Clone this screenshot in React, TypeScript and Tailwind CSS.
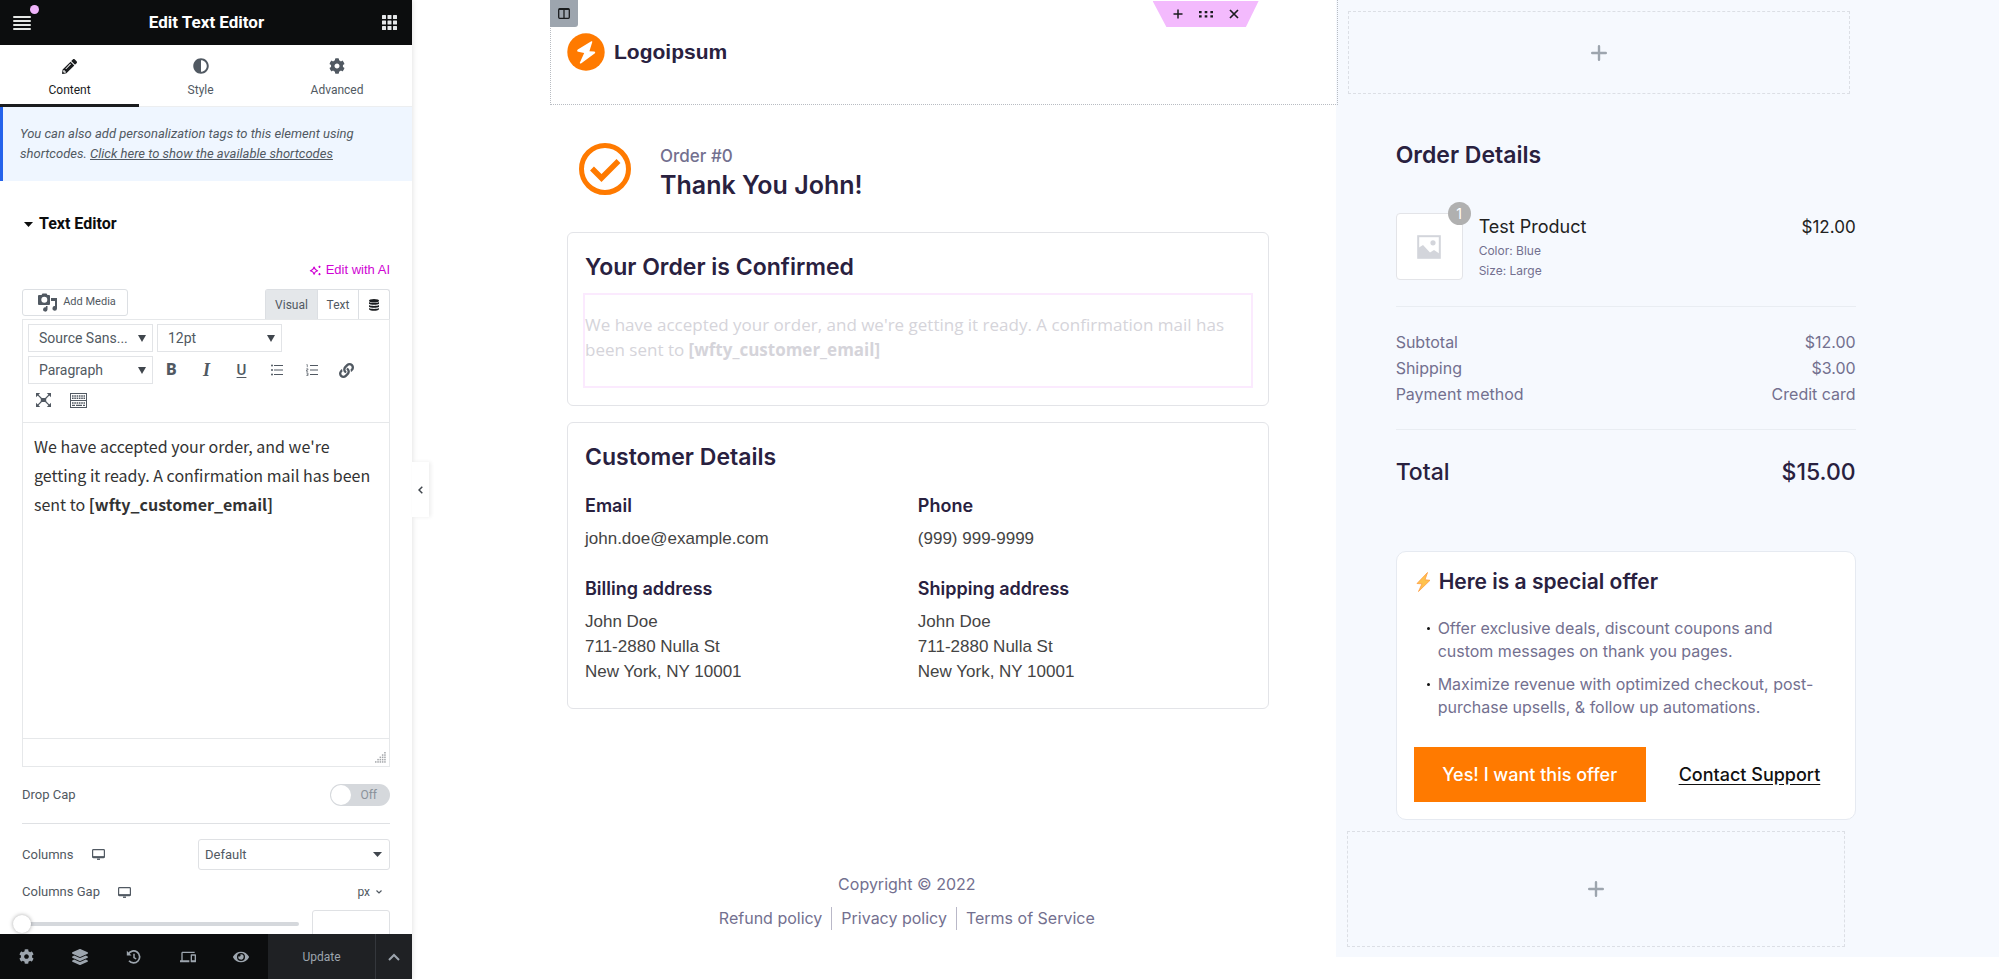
import React from 'react';
import { FaAdjust, FaCog, FaLayerGroup, FaLink, FaPencilAlt, FaEye } from 'react-icons/fa';
import { MdDevices } from 'react-icons/md';

const SANS = "font-['Inter',sans-serif]";

function Caret({ className }: { className: string }) {
  return (
    <svg viewBox="0 0 8 6" preserveAspectRatio="none" className={className} fill="currentColor" aria-hidden="true">
      <path d="M0 0h8L4 6z" />
    </svg>
  );
}

function MenuIcon() {
  return (
    <svg viewBox="0 0 18 14" className="h-[14px] w-[18px]" fill="#e6e8e6" aria-hidden="true">
      <rect y="0" width="18" height="2" rx="1" />
      <rect y="4" width="18" height="2" rx="1" />
      <rect y="8" width="18" height="2" rx="1" />
      <rect y="12" width="18" height="2" rx="1" />
    </svg>
  );
}

function GridIcon() {
  const cells = [0, 5.5, 11];
  return (
    <svg viewBox="0 0 15 15" className="size-[15px]" fill="#e6e8ea" aria-hidden="true">
      {cells.map((y) => cells.map((x) => <rect key={`${x}-${y}`} x={x} y={y} width="4" height="4" rx="0.5" />))}
    </svg>
  );
}

function SparkleIcon() {
  return (
    <svg viewBox="0 0 14 14" className="size-[13px]" fill="none" stroke="currentColor" strokeWidth="1.2" aria-hidden="true">
      <path d="M5.5 3.2C6 5.8 6.7 6.6 9.3 7.2 6.7 7.8 6 8.5 5.5 11.1 5 8.5 4.2 7.8 1.4 7.2 4.2 6.6 5 5.8 5.5 3.2Z" strokeLinejoin="round" />
      <path d="M11.3 1.8v2.400M10.1 3h2.400M11.3 9.800v2.400M10.1 11h2.400" />
    </svg>
  );
}

function MediaIcon() {
  return (
    <svg viewBox="0 0 20 19" className="h-[19px] w-[20px]" fill="currentColor" aria-hidden="true">
      <path d="M2 2h1.5L4.5.5h4L9.5 2H11a1 1 0 0 1 1 1v8a1 1 0 0 1-1 1H1a1 1 0 0 1-1-1V3a1 1 0 0 1 1-1zM6.3 3.8a3 3 0 1 0 0 6 3 3 0 0 0 0-6z" fillRule="evenodd" />
      <path d="M13 5h6v10.5a2.3 2.3 0 1 1-2-2.4V8h-4z" />
      <path d="M9.500 13v3.500a2.200 2.200 0 1 1-1.600-2.200V13z" />
    </svg>
  );
}

function DatabaseIcon() {
  return (
    <svg viewBox="0 0 10 12" className="h-3 w-[10px]" fill="#1b1d20" aria-hidden="true">
      <ellipse cx="5" cy="1.700" rx="5" ry="1.700" />
      <path d="M0 3c1.500 1.200 8.500 1.200 10 0v1.800c-1.500 1.300-8.500 1.300-10 0zM0 6c1.500 1.200 8.500 1.200 10 0v1.800c-1.500 1.300-8.500 1.300-10 0zM0 9c1.500 1.200 8.500 1.200 10 0v1.300c-1.500 2-8.500 2-10 0z" />
    </svg>
  );
}

function HistoryIcon() {
  return (
    <svg viewBox="0 0 15 14" className="h-[14px] w-[15px]" fill="none" stroke="currentColor" strokeWidth="1.700" aria-hidden="true">
      <path d="M2.300 4.200A6 6 0 1 1 3 10.800" />
      <path d="M8 3.800v3.700l2.200 1.500" strokeWidth="1.500" />
      <path d="M.800.800v4.700h4.700z" fill="currentColor" stroke="none" />
    </svg>
  );
}

function MonitorIcon() {
  return (
    <svg viewBox="0 0 13 11" className="h-[11px] w-[13px]" fill="none" stroke="#515962" aria-hidden="true">
      <rect x="0.600" y="0.600" width="11.800" height="8" rx="0.800" strokeWidth="1.200" />
      <path d="M0.600 7.900h11.800" strokeWidth="1.600" />
      <path d="M5 10.200h3" strokeWidth="1.400" />
    </svg>
  );
}

function BulletListIcon() {
  return (
    <svg viewBox="0 0 12 12" className="size-3" stroke="currentColor" fill="currentColor" aria-hidden="true">
      <path d="M3 1.500h9M3 6h9M3 10.500h9" strokeWidth="1" />
      <g stroke="none">
        <circle cx="1" cy="1.500" r="1" />
        <circle cx="1" cy="6" r="1" />
        <circle cx="1" cy="10.500" r="1" />
      </g>
    </svg>
  );
}

function NumberListIcon() {
  return (
    <svg viewBox="0 0 12 12" className="size-3" stroke="currentColor" fill="none" aria-hidden="true">
      <path d="M4 1.500h8M4 6h8M4 10.500h8" strokeWidth="1" />
      <path d="M.5.600h.8v2.600M.3 4.800h1.600v1.200H.5v1.300h1.600M.3 8.900h1.700v2.700H.3M.8 10.200h1.200" strokeWidth="0.700" />
    </svg>
  );
}

function ExpandIcon() {
  return (
    <svg viewBox="0 0 15 14" className="h-[14px] w-[15px]" fill="currentColor" aria-hidden="true">
      <path d="M4.800 5h5.400v4H4.800zM0 0h4.200L0 4.200zM15 0v4.200L10.800 0zM0 14V9.800L4.200 14zM15 14h-4.200L15 9.800z" />
      <path d="M1 1l4.500 4.500M14 1L9.500 5.500M1 13l4.500-4.500M14 13L9.500 8.500" stroke="currentColor" strokeWidth="1.100" />
    </svg>
  );
}

function KeyboardIcon() {
  return (
    <svg viewBox="0 0 17 15" className="h-[15px] w-[17px]" fill="none" stroke="currentColor" aria-hidden="true">
      <rect x="0.500" y="0.500" width="16" height="14" />
      <path d="M1 7.500h15" strokeWidth="1" />
      <path d="M2 3h13M2 5.200h13M2 10h13" strokeWidth="1.400" strokeDasharray="1.600 0.700" />
      <path d="M2 12.400h3M6 12.400h6M13 12.400h2" strokeWidth="1.400" />
    </svg>
  );
}

function ResizeGrip() {
  const dots: [number, number][] = [];
  for (let c = 0; c < 5; c++) for (let r = 0; r <= c; r++) dots.push([c * 2.3, 9.2 - r * 2.3]);
  return (
    <svg viewBox="0 0 11 11" className="size-[11px]" fill="#a3a6aa" aria-hidden="true">
      {dots.map(([x, y]) => (
        <rect key={`${x}-${y}`} x={x} y={y} width="1.500" height="1.500" />
      ))}
    </svg>
  );
}

function ToolbarSelect({ label, value }: { label: string; value: string }) {
  return (
    <div className="relative h-7 w-[125px]">
      <select
        aria-label={label}
        defaultValue={value}
        className="size-full appearance-none rounded-none border border-[#e2e4e7] bg-white pl-[10px] text-sm text-[#515962]"
      >
        <option>{value}</option>
      </select>
      <Caret className="pointer-events-none absolute right-[7px] top-[11px] h-[7px] w-2 text-[#40464d]" />
    </div>
  );
}

function ToolButton({ label, children }: { label: string; children: React.ReactNode }) {
  return (
    <button type="button" aria-label={label} className="flex h-7 w-[35px] items-center justify-center text-[#515962]">
      {children}
    </button>
  );
}

function PanelTab({ label, icon, active }: { label: string; icon: React.ReactNode; active?: boolean }) {
  return (
    <button
      type="button"
      role="tab"
      aria-selected={!!active}
      className={
        active
          ? 'flex flex-auto flex-col items-center gap-2 border-b-[3px] border-[#1a1c1e] pt-[13px] text-[12px] leading-4 text-[#1a1c1e]'
          : 'flex flex-auto flex-col items-center gap-2 border-b border-[#eceef0] pt-[13px] text-[12px] leading-4 text-[#515962]'
      }
    >
      <span className="flex size-4 items-center justify-center">{icon}</span>
      {label}
    </button>
  );
}

function EditorPanel() {
  return (
    <aside className="relative z-10 flex h-screen w-[412px] shrink-0 flex-col bg-white font-['Roboto',sans-serif] text-[13px] text-[#515962] shadow-[0_0_6px_rgba(0,0,0,0.14)]">
      <header className="flex h-[45px] shrink-0 items-center justify-between bg-[#0c0d0e] pl-[13px] pr-[15px]">
        <button type="button" aria-label="Menu" className="relative">
          <MenuIcon />
          <span className="absolute -right-2 -top-[11px] size-[9px] rounded-full bg-[#f0b4fb]" />
        </button>
        <h1 className="text-[17px] font-bold text-white">Edit Text Editor</h1>
        <button type="button" aria-label="Widgets">
          <GridIcon />
        </button>
      </header>

      <div role="tablist" className="flex h-[62px] shrink-0">
        <PanelTab label="Content" active icon={<FaPencilAlt className="size-[15px]" />} />
        <PanelTab label="Style" icon={<FaAdjust className="size-4" />} />
        <PanelTab label="Advanced" icon={<FaCog className="size-4" />} />
      </div>

      <div className="min-h-0 flex-1 overflow-hidden">
        <p className="h-[74px] border-l-[3px] border-[#2563eb] bg-[#eff6ff] pl-[17px] pt-[17px] text-[13px] italic leading-5">
          You can also add personalization tags to this element using
          <br />
          shortcodes.{' '}
          <a href="#shortcodes" className="underline">
            Click here to show the available shortcodes
          </a>
        </p>

        <div className="px-[22px]">
          <h2 className="mt-[31px] flex h-6 items-center gap-[6px] text-base font-bold text-[#0c0d0e]">
            <Caret className="ml-[2px] h-[5px] w-[9px]" />
            Text Editor
          </h2>

          <div className="mt-6 flex h-5 justify-end">
            <button type="button" className="flex items-center gap-1 font-['Liberation_Sans',sans-serif] text-[13px] text-[#d004d4]">
              <SparkleIcon />
              Edit with AI
            </button>
          </div>

          <div className="mt-[9px] flex h-[30px] items-start justify-between text-xs">
            <button type="button" className="flex h-[27px] w-[106px] items-center justify-center gap-[5px] rounded-[3px] border border-[#dcdfe3] pl-1 text-[11px]">
              <MediaIcon />
              Add Media
            </button>
            <div className="flex h-full rounded-t-[3px] border border-b-0 border-[#dcdfe3]">
              <button type="button" className="w-[51px] bg-[#e4e7ea]">Visual</button>
              <button type="button" className="w-[41px] border-l border-[#dcdfe3]">Text</button>
              <button type="button" aria-label="Dynamic tags" className="flex w-[31px] items-center justify-center border-l border-[#dcdfe3]">
                <DatabaseIcon />
              </button>
            </div>
          </div>

          <div className="border border-[#e6e8ea]">
            <div className="flex h-[103px] flex-col gap-1 border-b border-[#e6e8ea] px-[5px] pt-1">
              <div className="flex gap-1">
                <ToolbarSelect label="Font family" value="Source Sans..." />
                <ToolbarSelect label="Font size" value="12pt" />
              </div>
              <div className="flex">
                <ToolbarSelect label="Block format" value="Paragraph" />
                <div className="flex pl-[1px]">
                  <ToolButton label="Bold"><span className="text-base font-black">B</span></ToolButton>
                  <ToolButton label="Italic"><span className="font-['Liberation_Serif',serif] text-lg font-bold italic">I</span></ToolButton>
                  <ToolButton label="Underline"><span className="text-[15px] font-medium underline underline-offset-2">U</span></ToolButton>
                  <ToolButton label="Bulleted list"><BulletListIcon /></ToolButton>
                  <ToolButton label="Numbered list"><NumberListIcon /></ToolButton>
                  <ToolButton label="Insert link"><FaLink className="size-[15px]" /></ToolButton>
                </div>
              </div>
              <div className="-ml-[2px] -mt-[2px] flex">
                <ToolButton label="Fullscreen"><ExpandIcon /></ToolButton>
                <ToolButton label="Toolbar toggle"><KeyboardIcon /></ToolButton>
              </div>
            </div>
            <div
              contentEditable
              suppressContentEditableWarning
              role="textbox"
              aria-label="Text Editor"
              className="h-[315px] px-[11px] pt-[9px] font-['Noto_Sans_CJK_SC',sans-serif] text-base leading-[29px] text-[#333]"
            >
              We have accepted your order, and we're getting it ready. A confirmation mail has been sent to{' '}
              <strong>[wfty_customer_email]</strong>
            </div>
            <div className="flex h-[28px] items-end justify-end border-t border-[#e6e8ea] p-[3px]">
              <ResizeGrip />
            </div>
          </div>

          <label className="mt-[17px] flex h-[22px] items-center justify-between">
            Drop Cap
            <input type="checkbox" role="switch" className="sr-only" />
            <span className="flex h-[22px] w-[60px] items-center justify-between rounded-full bg-[#d5d8dc] pl-px pr-[13px] text-xs text-[#8b929a]">
              <span className="size-5 rounded-full bg-white" />
              Off
            </span>
          </label>

          <hr className="mb-[15px] mt-[17px] border-[#dfe1e4]" />

          <div className="flex h-[31px] items-center justify-between">
            <label htmlFor="columns" className="flex items-center gap-[18px]">
              Columns <MonitorIcon />
            </label>
            <div className="relative h-full w-48">
              <select id="columns" className="size-full appearance-none rounded-[3px] border border-[#dfe1e4] bg-white pl-[6px] text-[#515962]">
                <option>Default</option>
              </select>
              <Caret className="pointer-events-none absolute right-2 top-[13px] h-[5px] w-[9px] text-[#40464d]" />
            </div>
          </div>

          <div className="mt-[12px] flex h-5 items-center justify-between">
            <label htmlFor="columns-gap" className="flex items-center gap-[18px]">
              Columns Gap <MonitorIcon />
            </label>
            <button type="button" className="flex items-center gap-[6px] pr-2 text-xs">
              px
              <svg viewBox="0 0 6 4" className="h-1 w-[6px]" fill="none" stroke="currentColor" strokeWidth="1.200" aria-hidden="true">
                <path d="M.5.500L3 3 5.500.500" />
              </svg>
            </button>
          </div>

          <div className="mt-2 flex h-7 items-center justify-between">
            <input
              id="columns-gap"
              type="range"
              defaultValue={0}
              className="-ml-[9px] h-[18px] w-[286px] appearance-none bg-transparent [&::-webkit-slider-runnable-track]:h-1 [&::-webkit-slider-runnable-track]:rounded-full [&::-webkit-slider-runnable-track]:bg-[#d5d8dc] [&::-webkit-slider-thumb]:-mt-[7px] [&::-webkit-slider-thumb]:size-[18px] [&::-webkit-slider-thumb]:appearance-none [&::-webkit-slider-thumb]:rounded-full [&::-webkit-slider-thumb]:bg-white [&::-webkit-slider-thumb]:shadow-[0_0_4px_rgba(0,0,0,0.35)]"
            />
            <input type="number" aria-label="Columns gap value" className="h-7 w-[78px] rounded-[3px] border border-[#dfe1e4]" />
          </div>
        </div>
      </div>

      <footer className="mb-px flex h-[45px] shrink-0 bg-[#0c0d0e] text-[#9da5ae]">
        <div className="flex flex-1">
          <button type="button" aria-label="Settings" className="flex flex-1 items-center justify-center"><FaCog className="size-[15px]" /></button>
          <button type="button" aria-label="Navigator" className="flex flex-1 items-center justify-center"><FaLayerGroup className="size-4" /></button>
          <button type="button" aria-label="History" className="flex flex-1 items-center justify-center"><HistoryIcon /></button>
          <button type="button" aria-label="Responsive mode" className="flex flex-1 items-center justify-center"><MdDevices className="size-4" /></button>
          <button type="button" aria-label="Preview" className="flex flex-1 items-center justify-center"><FaEye className="size-4" /></button>
        </div>
        <button type="button" className="w-[107px] bg-[#1f2124] text-xs">Update</button>
        <button type="button" aria-label="Save options" className="flex w-[37px] items-center justify-center border-l border-[#34373c] bg-[#1f2124]">
          <svg viewBox="0 0 12 8" className="h-2 w-3" fill="none" stroke="currentColor" strokeWidth="2" aria-hidden="true">
            <path d="M1 7l5-5 5 5" />
          </svg>
        </button>
      </footer>

      <button type="button" aria-label="Collapse panel" className="absolute left-full top-[462px] flex h-[55px] w-[17px] items-center justify-center bg-white shadow-[2px_0_4px_rgba(0,0,0,0.07)]">
        <svg viewBox="0 0 5 8" className="h-2 w-[5px]" fill="none" stroke="#40464d" strokeWidth="1.500" aria-hidden="true">
          <path d="M4.300.700L1 4l3.300 3.300" />
        </svg>
      </button>
    </aside>
  );
}

function Detail({ title, children }: { title: string; children: React.ReactNode }) {
  return (
    <div>
      <h4 className={`${SANS} text-[18px] font-semibold leading-[25px] text-[#29213f]`}>{title}</h4>
      <div className="mt-2 text-[17px] leading-[25px] text-[#444]">{children}</div>
    </div>
  );
}

function Address() {
  return (
    <address className="not-italic">
      John Doe
      <br />
      711-2880 Nulla St
      <br />
      New York, NY 10001
    </address>
  );
}

function OrderColumn() {
  return (
    <div className="w-[58.2%] pl-[138px] font-['Liberation_Sans',sans-serif]">
      <section className="relative -mr-[2px] h-[105px] border border-t-0 border-dotted border-[#b8bcc2] pl-4 pt-[33px]">
        <button type="button" aria-label="Edit column" className="absolute -left-px top-0 flex h-[27px] w-7 items-center justify-center rounded-br-[3px] bg-[#9da5ae]">
          <svg viewBox="0 0 12 11" className="h-[11px] w-3" fill="none" stroke="#1a1c1e" strokeWidth="1.300" aria-hidden="true">
            <rect x="0.700" y="0.700" width="10.600" height="9.600" rx="1" />
            <path d="M6 .700v9.600M1 1.300h10" />
          </svg>
        </button>
        <div className="absolute right-[78px] top-px flex h-[26px] w-[106px] items-center justify-center gap-4 bg-[#f3bafd] text-[#1a1c1e] [clip-path:polygon(0_0,100%_0,88%_100%,13%_100%)]">
          <button type="button" aria-label="Add section">
            <svg viewBox="0 0 10 10" className="size-[10px]" stroke="currentColor" strokeWidth="1.500" aria-hidden="true"><path d="M5 .500v9M.500 5h9" /></svg>
          </button>
          <button type="button" aria-label="Edit section">
            <svg viewBox="0 0 16 9" className="h-2 w-[14px]" fill="currentColor" aria-hidden="true">
              <path d="M0 1h3v2.500H0zM6.500 1h3v2.500h-3zM13 1h3v2.500h-3zM0 6h3v2.500H0zM6.500 6h3v2.500h-3zM13 6h3v2.500h-3z" />
            </svg>
          </button>
          <button type="button" aria-label="Delete section">
            <svg viewBox="0 0 10 10" className="size-[10px]" stroke="currentColor" strokeWidth="1.700" aria-hidden="true"><path d="M1 1l8 8M9 1L1 9" /></svg>
          </button>
        </div>
        <div className="flex items-center gap-[9px]">
          <svg viewBox="0 0 38 38" className="size-[38px]" aria-hidden="true">
            <circle cx="19" cy="19" r="18.700" fill="#ff7a00" />
            <path d="M24.300 8.300L10.800 16.600c-1 .8-.8 2 .4 2.200l6 1.200-4.300 9.600c-.3.900.5 1.300 1.100.8L27.600 20.600c1-.8.700-1.900-.5-2.100l-4.700-.2 2.900-9.200c.2-.8-.3-1.200-1-.8z" fill="#fff" />
          </svg>
          <span className="text-[21px] font-bold text-[#29213f]">Logoipsum</span>
        </div>
      </section>

      <div className="pl-[17px] pr-[67px]">
        <div className={`${SANS} mt-[38px] flex items-start gap-[29px] pl-3`}>
          <svg viewBox="0 0 52 52" className="size-[52px]" fill="none" stroke="#ff7a00" aria-hidden="true">
            <circle cx="26" cy="26" r="23.500" strokeWidth="5" />
            <path d="M13 25.500l9.500 9.500L39.500 18" strokeWidth="5.500" />
          </svg>
          <div>
            <p className="text-[17px] font-medium leading-[26px] text-[#73708f]">Order #0</p>
            <h2 className="text-[25px] font-semibold leading-8 text-[#29213f]">Thank You John!</h2>
          </div>
        </div>

        <section className="mt-[31px] rounded-md border border-[#e3e4e8] px-[15px] pb-[17px] pt-[18px]">
          <h3 className={`${SANS} px-[2px] text-[23px] font-semibold leading-8 text-[#29213f]`}>Your Order is Confirmed</h3>
          <p className="mt-[10px] h-[95px] border-2 border-[#fbeafe] pt-[17px] font-['Open_Sans',sans-serif] text-[17px] leading-[25px] text-[#d5d4da]">
            We have accepted your order, and we're getting it ready. A confirmation mail has been sent to{' '}
            <strong>[wfty_customer_email]</strong>
          </p>
        </section>

        <section className="mt-4 rounded-md border border-[#e3e4e8] px-[17px] pb-6 pt-[18px]">
          <h3 className={`${SANS} text-[23px] font-semibold leading-8 text-[#29213f]`}>Customer Details</h3>
          <div className="mt-5 grid grid-cols-2 gap-y-[25px]">
            <Detail title="Email">john.doe@example.com</Detail>
            <Detail title="Phone">(999) 999-9999</Detail>
            <Detail title="Billing address"><Address /></Detail>
            <Detail title="Shipping address"><Address /></Detail>
          </div>
        </section>
      </div>

      <footer className={`${SANS} mt-[163px] pr-[72px] text-center text-base text-[#73708f]`}>
        <p className="leading-[25px]">Copyright © 2022</p>
        <nav className="mt-[10px] flex h-[23px] justify-center divide-x divide-[#b9b8c8] leading-[23px]">
          <a href="#refund" className="px-[9px]">Refund policy</a>
          <a href="#privacy" className="px-[9px]">Privacy policy</a>
          <a href="#terms" className="px-[9px]">Terms of Service</a>
        </nav>
      </footer>
    </div>
  );
}

function DropZone({ className }: { className: string }) {
  return (
    <button type="button" aria-label="Add widget" className={className}>
      <svg viewBox="0 0 16 16" className="size-4" stroke="#9da5ae" strokeWidth="2.400" strokeLinecap="round" aria-hidden="true">
        <path d="M8 1.200v13.600M1.200 8h13.600" />
      </svg>
    </button>
  );
}

const totals = [
  ['Subtotal', '$12.00'],
  ['Shipping', '$3.00'],
  ['Payment method', 'Credit card'],
];

const offers = [
  'Offer exclusive deals, discount coupons and custom messages on thank you pages.',
  'Maximize revenue with optimized checkout, post-purchase upsells, & follow up automations.',
];

function SummaryColumn() {
  return (
    <div className={`${SANS} flex-1 self-start bg-[#f6f9fe] pb-[10px] pt-[11px]`}>
      <DropZone className="ml-3 flex h-[83px] w-full max-w-[502px] items-center justify-center border border-dashed border-[#dcdfe5]" />

      <div className="ml-[60px] mt-[45px] max-w-[460px]">
        <h2 className="text-[23px] font-semibold leading-8 text-[#29213f]">Order Details</h2>

        <div className="mt-[42px] flex h-[94px] items-start gap-4 border-b border-[#e9edf2]">
          <div className="relative flex size-[67px] items-center justify-center rounded border border-[#e3e4e8] bg-white">
            <svg viewBox="0 0 24 24" className="size-6" aria-hidden="true">
              <rect x="1.200" y="1.200" width="21.600" height="21.600" fill="#fff" stroke="#d3d5db" strokeWidth="2" />
              <circle cx="16" cy="7.800" r="2.600" fill="#d3d5db" />
              <path d="M2 12.500L6 10l7 7.500 4-2.500 6 4v4H2z" fill="#d3d5db" />
            </svg>
            <span className="absolute -right-[9px] -top-3 flex size-[23px] items-center justify-center rounded-full bg-[#b0b0b0] text-sm text-white">1</span>
          </div>
          <div className="flex-1">
            <p className="text-[18px] leading-7 text-[#222]">Test Product</p>
            <p className="text-xs leading-5 text-[#73708f]">
              Color: Blue
              <br />
              Size: Large
            </p>
          </div>
          <p className="text-[17px] leading-7 text-[#222]">$12.00</p>
        </div>

        <table className="mt-[22px] w-full text-base leading-[26px] text-[#73708f]">
          <tbody>
            {totals.map(([name, value]) => (
              <tr key={name}>
                <th scope="row" className="text-left font-normal">{name}</th>
                <td className="text-right">{value}</td>
              </tr>
            ))}
          </tbody>
        </table>

        <div className="mt-[22px] flex justify-between border-t border-[#e9edf2] pt-[26px] text-[23px] font-medium leading-8 text-[#29213f]">
          <span>Total</span>
          <span>$15.00</span>
        </div>

        <section className="mt-[63px] rounded-[10px] border border-[#e6eaf1] bg-white px-[17px] pb-[17px] pt-[14px]">
          <h3 className="flex items-center gap-2 text-[21px] font-semibold leading-8 text-[#29213f]">
            <svg viewBox="0 0 15 20" className="ml-[2px] h-5 w-[15px]" aria-hidden="true">
              <path d="M11.500.500L1 11.500l5 .3L2.500 19.500 14 8.300l-5-.5z" fill="#ffc34d" stroke="#ff9c40" strokeWidth="0.800" strokeLinejoin="round" />
            </svg>
            Here is a special offer
          </h3>
          <ul className="mt-[19px] flex flex-col gap-[10px] pl-[13px] pr-4 text-base leading-[23px] text-[#73708f]">
            {offers.map((text) => (
              <li key={text} className="flex gap-2">
                <span className="mt-[10px] size-[3px] shrink-0 rounded-full bg-[#111]" />
                {text}
              </li>
            ))}
          </ul>
          <div className="mt-[28px] flex items-center gap-[33px] text-[18px] font-medium">
            <button type="button" className="h-[55px] w-[232px] bg-[#ff7a00] text-white">Yes! I want this offer</button>
            <a href="#support" className="whitespace-nowrap text-[#111] underline underline-offset-[3px]">Contact Support</a>
          </div>
        </section>
      </div>

      <DropZone className="ml-[11px] mt-[11px] flex h-[116px] w-full max-w-[498px] items-center justify-center border border-dashed border-[#dcdfe5]" />
    </div>
  );
}

export default function App() {
  return (
    <div className="flex min-h-screen bg-white">
      <EditorPanel />
      <main className="flex flex-1">
        <OrderColumn />
        <SummaryColumn />
      </main>
    </div>
  );
}
